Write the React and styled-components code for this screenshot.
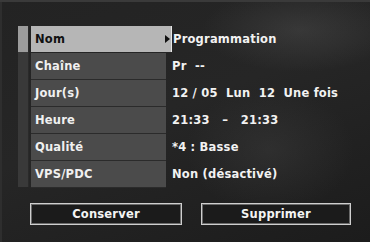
import React from "react";
import styled, { createGlobalStyle } from "styled-components";

const GlobalStyle = createGlobalStyle`
  html, body {
    margin: 0;
    padding: 0;
    background: #1c1c1c;
  }
  * { box-sizing: border-box; }
`;

const Screen = styled.div`
  width: 370px;
  height: 242px;
  overflow: hidden;
  padding: 26px 0 0 18px;
  display: flex;
  flex-direction: column;
  box-shadow: inset 0 2px 0 #3a3a3a, inset 2px 0 0 #2e2e2e;
  background:
    radial-gradient(ellipse 140px 60px at 300px 30px, rgba(90, 90, 90, 0.35), transparent 70%),
    radial-gradient(ellipse 120px 90px at 270px 150px, rgba(70, 70, 70, 0.35), transparent 70%),
    linear-gradient(160deg, #232323 0%, #262626 45%, #1c1c1c 100%);
  font-family: "DejaVu Sans", "Liberation Sans", sans-serif;
  font-weight: bold;
  color: #f2f2f2;
`;

const Table = styled.div`
  display: grid;
  grid-template-columns: 11px 135px 1fr;
  grid-auto-rows: 26px;
  row-gap: 1px;
  column-gap: 2px;
`;

const Strip = styled.div`
  grid-column: 1;
  grid-row: 1 / span 6;
  background: linear-gradient(#9c9c9c 0 26px, #393939 26px);
  border-right: 1px solid #2a2a2a;
`;

const Label = styled.div`
  grid-column: 2;
  display: flex;
  align-items: center;
  padding-left: 4px;
  font-size: 11.5px;
  letter-spacing: 0.2px;
  position: relative;
  background: ${(p) => (p.$selected ? "#b6b6b6" : "#4b4b4b")};
  color: ${(p) => (p.$selected ? "#111" : "#f0f0f0")};
  margin-right: ${(p) => (p.$selected ? "-6px" : "0")};
  border-right: ${(p) => (p.$selected ? "1px solid #e6e6e6" : "none")};
  box-shadow: ${(p) => (p.$selected ? "none" : "0 1px 0 #2b2b2b")};
`;

const Arrow = styled.span`
  position: absolute;
  right: 1px;
  top: 50%;
  transform: translateY(-50%);
  width: 0;
  height: 0;
  border-top: 4px solid transparent;
  border-bottom: 4px solid transparent;
  border-left: 5px solid #111;
`;

const Value = styled.div`
  grid-column: 3;
  display: flex;
  align-items: center;
  padding-left: ${(p) => (p.$selected ? "0" : "4px")};
  margin-left: ${(p) => (p.$selected ? "5px" : "0")};
  font-size: 11.5px;
  letter-spacing: 0.2px;
  white-space: pre;
`;

const Buttons = styled.div`
  display: flex;
  gap: 19px;
  margin-top: 16px;
  padding-left: 12px;
`;

const Button = styled.button`
  width: ${(p) => p.$w}px;
  height: 22px;
  background: #1b1b1b;
  border: 1px solid #cfcfcf;
  box-shadow: inset 0 0 0 1px #6a6a6a;
  color: #f4f4f4;
  font-family: "DejaVu Sans", "Liberation Sans", sans-serif;
  font-weight: bold;
  font-size: 11.5px;
  letter-spacing: 0.2px;
  padding: 0;
`;

const rows = [
  ["Nom", "Programmation"],
  ["Chaîne", "Pr  --"],
  ["Jour(s)", "12 / 05  Lun  12  Une fois"],
  ["Heure", "21:33   –   21:33"],
  ["Qualité", "*4 : Basse"],
  ["VPS/PDC", "Non (désactivé)"],
];

export default function App() {
  return (
    <>
      <GlobalStyle />
      <Screen>
        <Table>
          <Strip />
          {rows.map(([label, value], i) => (
            <React.Fragment key={label}>
              <Label $selected={i === 0} style={{ gridRow: i + 1 }}>
                {label}
                {i === 0 && <Arrow />}
              </Label>
              <Value $selected={i === 0} style={{ gridRow: i + 1 }}>
                {value}
              </Value>
            </React.Fragment>
          ))}
        </Table>
        <Buttons>
          <Button $w={152}>Conserver</Button>
          <Button $w={150}>Supprimer</Button>
        </Buttons>
      </Screen>
    </>
  );
}
